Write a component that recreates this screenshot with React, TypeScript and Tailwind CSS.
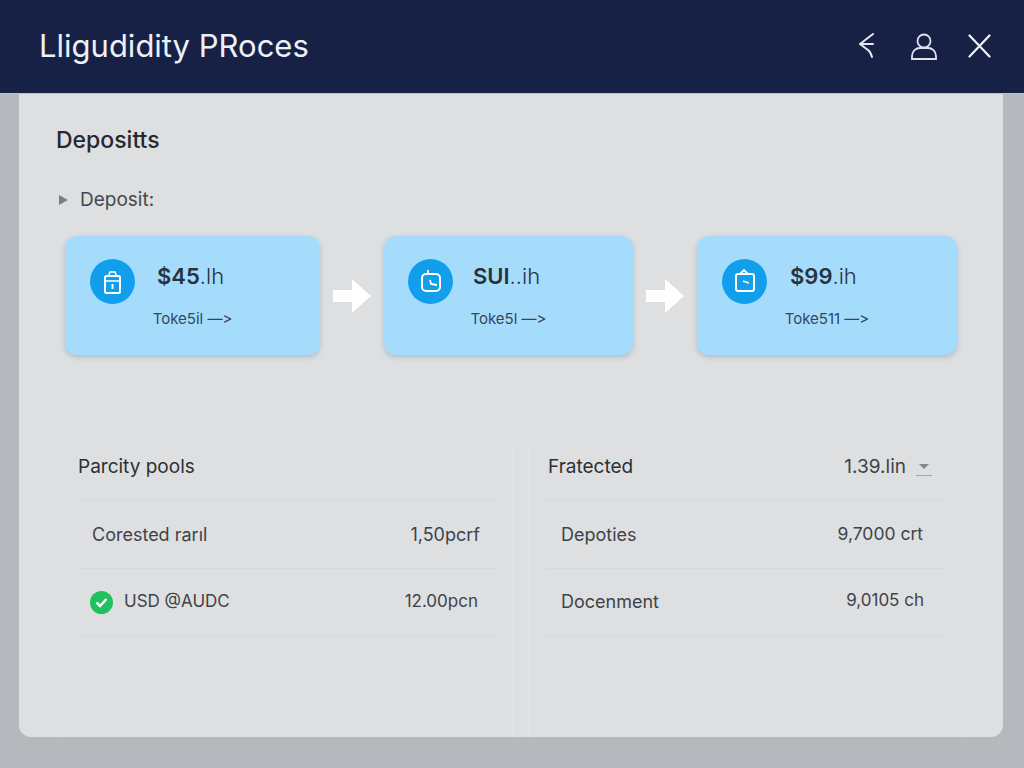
import type { ReactNode } from "react";

const font = "font-['Inter','Liberation_Sans',sans-serif]";

function BlockArrow() {
  return (
    <svg width="38" height="34" viewBox="0 0 38 34" className="shrink-0">
      <polygon points="0,11 19,11 19,0 38,17 19,34 19,23 0,23" fill="#ffffff" />
    </svg>
  );
}

function BagIcon() {
  return (
    <svg width="45" height="45" viewBox="0 0 45 45" fill="none" stroke="#ffffff" strokeWidth="2">
      <rect x="15" y="17" width="15" height="17" rx="1.5" />
      <path d="M15 22h15M18.500 17l1.500-4h5l1.500 4" strokeWidth="1.600" />
      <path d="M22.500 25v5" strokeWidth="2" />
    </svg>
  );
}

function ClipClockIcon() {
  return (
    <svg width="45" height="45" viewBox="0 0 45 45" fill="none" stroke="#ffffff" strokeWidth="2">
      <rect x="14" y="15" width="18" height="17" rx="4" />
      <path d="M20 15v-4M22 21l1 4 6 1" strokeWidth="1.800" />
    </svg>
  );
}

function ClipHandIcon() {
  return (
    <svg width="45" height="45" viewBox="0 0 45 45" fill="none" stroke="#ffffff" strokeWidth="2">
      <rect x="14" y="15" width="18" height="17" rx="2" />
      <path d="M18 15l4-4 4 4M21 22l6 2" strokeWidth="1.800" />
    </svg>
  );
}

function TokenCard({
  width,
  pad,
  gap,
  icon,
  bold,
  rest,
  token,
}: {
  width: string;
  pad: string;
  gap: string;
  icon: ReactNode;
  bold: string;
  rest: string;
  token: string;
}) {
  return (
    <div className={`${width} h-[119px] shrink-0 rounded-[12px] bg-[#a6dcfb] shadow-[0_2px_5px_rgba(90,120,150,0.35)] flex flex-col`}>
      <div className={`flex items-start ${pad} ${gap} pt-[23px]`}>
        <div className="w-[45px] h-[45px] rounded-full bg-[#119fec] shrink-0">{icon}</div>
        <div className="text-[22px] leading-[34px] text-[#28323f]">
          <span className="font-semibold">{bold}</span>
          <span className="font-light">{rest}</span>
        </div>
      </div>
      <div className="mt-[4px] text-center text-[15px] leading-[22px] text-[#34475a] [font-feature-settings:'calt'_0]">{token}</div>
    </div>
  );
}

function Row({
  label,
  value,
  icon,
  end,
  height = "h-[68px]",
  labelSize = "",
  valueSize = "",
}: {
  label: string;
  value: string;
  icon?: ReactNode;
  end: string;
  height?: string;
  labelSize?: string;
  valueSize?: string;
}) {
  return (
    <div className={`${height} border-b border-[#d6d8db] flex items-center justify-between ${end}`}>
      <div className={`flex items-center gap-[11px] ${labelSize}`}>
        {icon}
        <span>{label}</span>
      </div>
      <span className={valueSize}>{value}</span>
    </div>
  );
}

export default function App() {
  return (
    <div className={`${font} w-[1024px] h-[768px] overflow-hidden bg-[#b5b8bc] flex flex-col`}>
      <header className="h-[94px] shrink-0 bg-[#172145] border-b border-[#b9c3d6] flex items-center justify-between pl-[39px] pr-[33px]">
        <h1 className="text-[31px] leading-[40px] text-[#eef0f8] font-normal mb-[2px]">Lligudidity PRoces</h1>
        <div className="flex items-center gap-[31px] mb-[1px]">
          <svg width="16" height="26" viewBox="0 0 16 26" fill="none" stroke="#e6e8f0" strokeWidth="2" strokeLinecap="round" strokeLinejoin="round" className="mr-[5px]">
            <path d="M14 1 1 11h13M1 11l8 6c2 1.500 3 3 4 7" />
          </svg>
          <svg width="26" height="27" viewBox="0 0 26 27" fill="none" stroke="#dfe2ec" strokeWidth="1.800">
            <circle cx="13" cy="8" r="6.500" />
            <path d="M1 26v-3c0-5 4-8 8-8h8c4 0 8 3 8 8v3z" />
          </svg>
          <svg width="23" height="24" viewBox="0 0 23 24" fill="none" stroke="#f2f3f8" strokeWidth="2.200" strokeLinecap="round">
            <path d="M1.500 1.500 21.500 22.500M21.500 1.500 1.500 22.500" />
          </svg>
        </div>
      </header>

      <main className="ml-[19px] w-[984px] h-[643px] shrink-0 bg-[#dddfe1] rounded-b-[12px] overflow-hidden pt-[31px]">
        <h2 className="pl-[37px] text-[23px] leading-[30px] font-medium text-[#26292e]">Depositts</h2>

        <div className="mt-[31px] pl-[40px] flex items-center gap-[12px] text-[19px] leading-[28px] text-[#45494f]">
          <span className="w-0 h-0 border-y-[5px] border-y-transparent border-l-[9px] border-l-[#7b7e83]" />
          <span>Deposit:</span>
        </div>

        <div className="mt-[22px] pl-[46px] flex items-center gap-[13px]">
          <TokenCard width="w-[255px]" pad="pl-[25px]" gap="gap-[22px]" icon={<BagIcon />} bold="$45" rest=".lh" token="Toke5il —>" />
          <BlockArrow />
          <TokenCard width="w-[249px]" pad="pl-[24px]" gap="gap-[20px]" icon={<ClipClockIcon />} bold="SUI" rest="..ih" token="Toke5l —>" />
          <BlockArrow />
          <TokenCard width="w-[260px]" pad="pl-[25px]" gap="gap-[23px]" icon={<ClipHandIcon />} bold="$99" rest=".ih" token="Toke511 —>" />
        </div>

        <div className="mt-[75px] pl-[42px] flex gap-[15px] text-[18px] text-[#3f4349]">
          <section className="w-[452px] h-[340px] shrink-0 rounded-[14px] border border-[#e1e3e5] px-[16px]">
            <div className="h-[70px] pt-[3px] border-b border-[#d6d8db] flex items-center text-[19px] text-[#2c3036]">Parcity pools</div>
            <Row label="Corested rarıl" value="1,50pcrf" end="pl-[14px] pr-[16px]" />
            <Row
              label="USD @AUDC"
              value="12.00pcn"
              end="pl-[12px] pr-[18px]"
              height="h-[67px]"
              labelSize="text-[17px]"
              valueSize="text-[17px]"
              icon={
                <svg width="23" height="23" viewBox="0 0 23 23">
                  <circle cx="11.500" cy="11.500" r="11.500" fill="#21c25e" />
                  <path d="M6.500 11.500l3.500 3.500 6.500-7" fill="none" stroke="#ffffff" strokeWidth="2.500" />
                </svg>
              }
            />
          </section>

          <section className="w-[434px] h-[340px] shrink-0 rounded-[14px] border border-[#e1e3e5] px-[17px]">
            <div className="h-[70px] pt-[3px] border-b border-[#d6d8db] flex items-center justify-between pl-[2px] pr-[12px] text-[19px]">
              <span className="text-[#2c3036]">Fratected</span>
              <div className="flex items-center gap-[10px]">
                <span>1.39.lin</span>
                <div className="w-[16px] flex flex-col items-center gap-[6px] pt-[5px]">
                  <span className="w-0 h-0 border-x-[5px] border-x-transparent border-t-[5px] border-t-[#85888d]" />
                  <span className="w-[16px] h-[1px] bg-[#a4a7ab]" />
                </div>
              </div>
            </div>
            <Row label="Depoties" value="9,7000 crt" end="pl-[15px] pr-[21px]" valueSize="text-[17.500px]" />
            <Row label="Docenment" value="9,0105 ch" end="pl-[15px] pr-[20px] pb-[2px]" height="h-[67px]" valueSize="text-[17px]" />
          </section>
        </div>
      </main>
    </div>
  );
}
